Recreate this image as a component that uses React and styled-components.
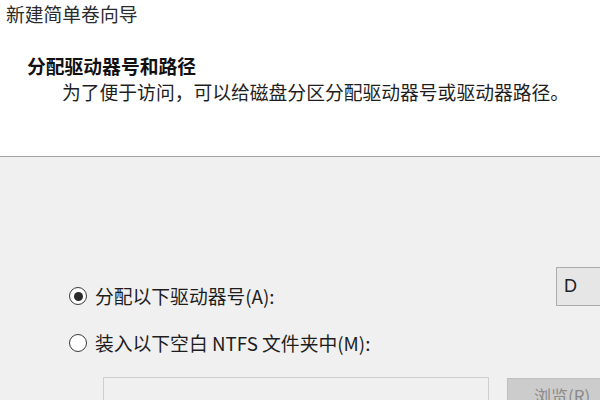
import styled, { createGlobalStyle } from "styled-components";

const GlobalStyle = createGlobalStyle`
	html, body {
		margin: 0;
		padding: 0;
		width: 600px;
		height: 400px;
		overflow: hidden;
		background: #f0f0f0;
	}
	body {
		font-family: "Noto Sans CJK SC", "Microsoft YaHei", "Noto Sans", sans-serif;
		color: #1e1e1e;
	}
`;

const Wizard = () => {
	return (
		<Window>
			<GlobalStyle />
			<Header>
				<Title>新建简单卷向导</Title>
				<Heading>分配驱动器号和路径</Heading>
				<Subtitle>为了便于访问，可以给磁盘分区分配驱动器号或驱动器路径。</Subtitle>
			</Header>
			<Body>
				<LetterRow>
					<Option $offset={17}>
						<Radio $checked />
						<span>分配以下驱动器号(A):</span>
					</Option>
					<Select>D</Select>
				</LetterRow>
				<Option $offset={23}>
					<Radio />
					<span>装入以下空白 NTFS 文件夹中(M):</span>
				</Option>
				<PathRow>
					<PathInput />
					<BrowseButton>浏览(R)...</BrowseButton>
				</PathRow>
			</Body>
		</Window>
	);
};

export default Wizard;

const Window = styled.div`
	width: 600px;
	height: 400px;
	overflow: hidden;
	display: flex;
	flex-direction: column;
	font-size: 18.8px;
	line-height: 24px;
`;

const Header = styled.div`
	height: 157px;
	flex-shrink: 0;
	box-sizing: border-box;
	background: #ffffff;
	padding: 2px 0 0 6px;
	border-bottom: 1px solid #a3a3a3;
	box-shadow: 0 1px 0 #d9d9d9;
`;

const Title = styled.div`
	color: #2b2b2b;
`;

const Heading = styled.div`
	margin-top: 28px;
	padding-left: 21px;
	font-weight: bold;
	color: #111;
`;

const Subtitle = styled.div`
	margin-top: 2px;
	padding-left: 56px;
	white-space: nowrap;
`;

const Body = styled.div`
	flex: 1;
	min-height: 0;
	padding: 110px 0 0 69px;
	background: #f0f0f0;
`;

const LetterRow = styled.div`
	display: flex;
	align-items: flex-start;
	justify-content: space-between;
`;

const Option = styled.label`
	display: flex;
	align-items: center;
	gap: 8px;
	margin-top: ${p => p.$offset}px;
	white-space: nowrap;
`;

const Radio = styled.span`
	width: 18px;
	height: 18px;
	box-sizing: border-box;
	border: 1.5px solid #3a3a3a;
	border-radius: 50%;
	background: #fff;
	display: flex;
	align-items: center;
	justify-content: center;
	&::after {
		content: "";
		width: 9px;
		height: 9px;
		border-radius: 50%;
		background: ${p => (p.$checked ? "#2a2a2a" : "transparent")};
	}
`;

const Select = styled.div`
	width: 80px;
	height: 39px;
	box-sizing: border-box;
	margin-right: -36px;
	padding: 6px 0 0 7px;
	background: #e6e6e6;
	border: 1px solid #acacac;
	font-family: "Liberation Sans", Arial, sans-serif;
	font-size: 18px;
	color: #222;
`;

const PathRow = styled.div`
	display: flex;
	align-items: flex-start;
	gap: 18px;
	margin: 22px 0 0 34px;
`;

const PathInput = styled.div`
	width: 386px;
	height: 40px;
	flex-shrink: 0;
	box-sizing: border-box;
	background: #f0f0f0;
	border: 1px solid #cfcfcf;
`;

const BrowseButton = styled.div`
	width: 110px;
	height: 36px;
	flex-shrink: 0;
	margin-top: 1px;
	box-sizing: border-box;
	padding: 5px 0 0 26px;
	background: #cccccc;
	border: 1px solid #bfbfbf;
	color: #8a8a8a;
	font-size: 17px;
	white-space: nowrap;
`;
